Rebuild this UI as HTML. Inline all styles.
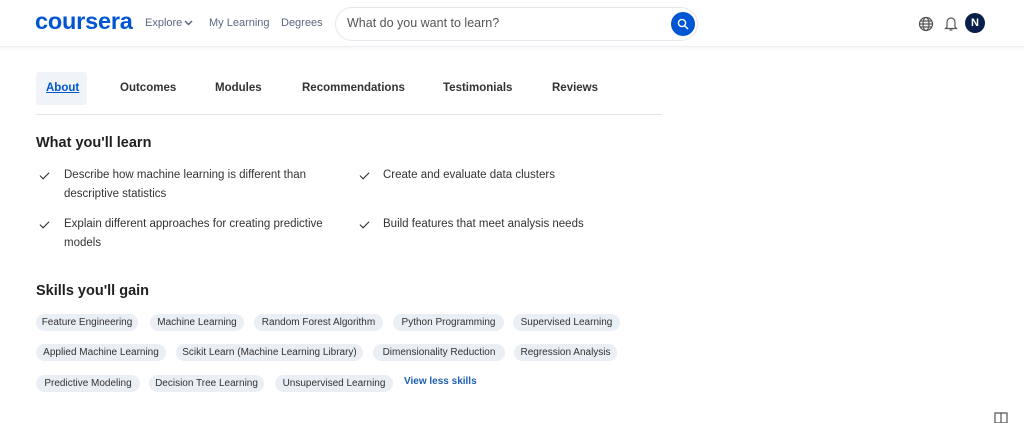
<!DOCTYPE html>
<html><head><meta charset="utf-8"><style>
*{margin:0;padding:0;box-sizing:border-box}
body{width:1024px;height:423px;background:#fff;font-family:"Liberation Sans",sans-serif;position:relative;overflow:hidden;color:#1f1f1f}
.a{position:absolute;white-space:nowrap}
.hdr{position:absolute;left:0;top:0;width:1024px;height:47px;border-bottom:1px solid #eceef1;box-shadow:0 2px 4px rgba(0,0,0,.04)}
.nav{font-size:11px;color:#5b6780}
.tab{font-size:11.5px;font-weight:bold;color:#333;top:82px}
.chip{position:absolute;height:17px;border-radius:9px;background:#eaeef5;font-size:10px;color:#333;line-height:17px;text-align:center}
.li{font-size:11.5px;color:#333;line-height:19px}
.ck{position:absolute;width:9px;height:5px;border-left:1.8px solid #222;border-bottom:1.8px solid #222;transform:rotate(-45deg)}
</style></head><body>
<div class="hdr"></div>
<div class="a" style="left:35px;top:8px;font-size:23.5px;font-weight:bold;color:#0056d2;letter-spacing:-0.2px">coursera</div>
<div class="a nav" style="left:145px;top:17px">Explore</div>
<svg class="a" style="left:184px;top:20px" width="9" height="6"><path d="M1 1l3.5 3.5L8 1" stroke="#5b6780" stroke-width="1.5" fill="none"/></svg>
<div class="a nav" style="left:209px;top:17px">My Learning</div>
<div class="a nav" style="left:281px;top:17px">Degrees</div>
<div class="a" style="left:335px;top:7px;width:363px;height:34px;border:1px solid #e4e7ec;border-radius:17px"></div>
<div class="a" style="left:347px;top:16px;font-size:12.5px;color:#555">What do you want to learn?</div>
<div class="a" style="left:671px;top:12px;width:24px;height:24px;border-radius:50%;background:#0056d2"></div>
<svg class="a" style="left:677px;top:18px" width="12" height="12"><circle cx="5" cy="5" r="3.6" stroke="#fff" stroke-width="1.4" fill="none"/><path d="M7.7 7.7L11 11" stroke="#fff" stroke-width="1.4"/></svg>
<svg class="a" style="left:918px;top:16px" width="16" height="16" fill="none" stroke="#555" stroke-width="1.2"><circle cx="8" cy="8" r="6.5"/><ellipse cx="8" cy="8" rx="3" ry="6.5"/><path d="M1.5 8h13M2.5 5h11M2.5 11h11"/></svg>
<svg class="a" style="left:944px;top:15px" width="14" height="17" fill="none" stroke="#555" stroke-width="1.2"><path d="M3 12V7a4 4 0 0 1 8 0v5l1.5 1.5h-11z"/><path d="M5.5 15h3"/></svg>
<div class="a" style="left:965px;top:13px;width:20px;height:20px;border-radius:50%;background:#0b1f4b;color:#fff;font-size:11px;font-weight:bold;text-align:center;line-height:20px">N</div>

<div class="a" style="left:36px;top:72px;width:51px;height:33px;background:#f0f3f8;border-radius:3px"></div>
<div class="a tab" style="left:46px;color:#0056d2;text-decoration:underline">About</div>
<div class="a tab" style="left:120px">Outcomes</div>
<div class="a tab" style="left:215px">Modules</div>
<div class="a tab" style="left:302px">Recommendations</div>
<div class="a tab" style="left:443px">Testimonials</div>
<div class="a tab" style="left:552px">Reviews</div>
<div class="a" style="left:36px;top:114px;width:626px;height:1px;background:#e1e4e8"></div>

<div class="a" style="left:36px;top:135px;font-size:14.5px;font-weight:bold;color:#1f1f1f">What you'll learn</div>
<div class="ck" style="left:40px;top:172px"></div>
<div class="a li" style="left:64px;top:166px">Describe how machine learning is different than<br>descriptive statistics</div>
<div class="ck" style="left:40px;top:221px"></div>
<div class="a li" style="left:64px;top:215px">Explain different approaches for creating predictive<br>models</div>
<div class="ck" style="left:360px;top:172px"></div>
<div class="a li" style="left:383px;top:166px">Create and evaluate data clusters</div>
<div class="ck" style="left:360px;top:221px"></div>
<div class="a li" style="left:383px;top:215px">Build features that meet analysis needs</div>

<div class="a" style="left:36px;top:283px;font-size:14.5px;font-weight:bold;color:#1f1f1f">Skills you'll gain</div>
<div class="chip" style="left:36px;top:314px;width:102px">Feature Engineering</div>
<div class="chip" style="left:150px;top:314px;width:94px">Machine Learning</div>
<div class="chip" style="left:254px;top:314px;width:129px">Random Forest Algorithm</div>
<div class="chip" style="left:393px;top:314px;width:111px">Python Programming</div>
<div class="chip" style="left:513px;top:314px;width:107px">Supervised Learning</div>
<div class="chip" style="left:36px;top:344px;width:130px">Applied Machine Learning</div>
<div class="chip" style="left:176px;top:344px;width:187px">Scikit Learn (Machine Learning Library)</div>
<div class="chip" style="left:373px;top:344px;width:132px">Dimensionality Reduction</div>
<div class="chip" style="left:514px;top:344px;width:103px">Regression Analysis</div>
<div class="chip" style="left:36px;top:375px;width:104px">Predictive Modeling</div>
<div class="chip" style="left:149px;top:375px;width:115px">Decision Tree Learning</div>
<div class="chip" style="left:275px;top:375px;width:118px">Unsupervised Learning</div>
<div class="a" style="left:404px;top:376px;font-size:10px;font-weight:bold;color:#1d5fb0">View less skills</div>
<svg class="a" style="left:994px;top:412px" width="14" height="11" fill="none" stroke="#555" stroke-width="1.2"><path d="M1 1h12v10H1zM7 1v10"/></svg>
</body></html>
